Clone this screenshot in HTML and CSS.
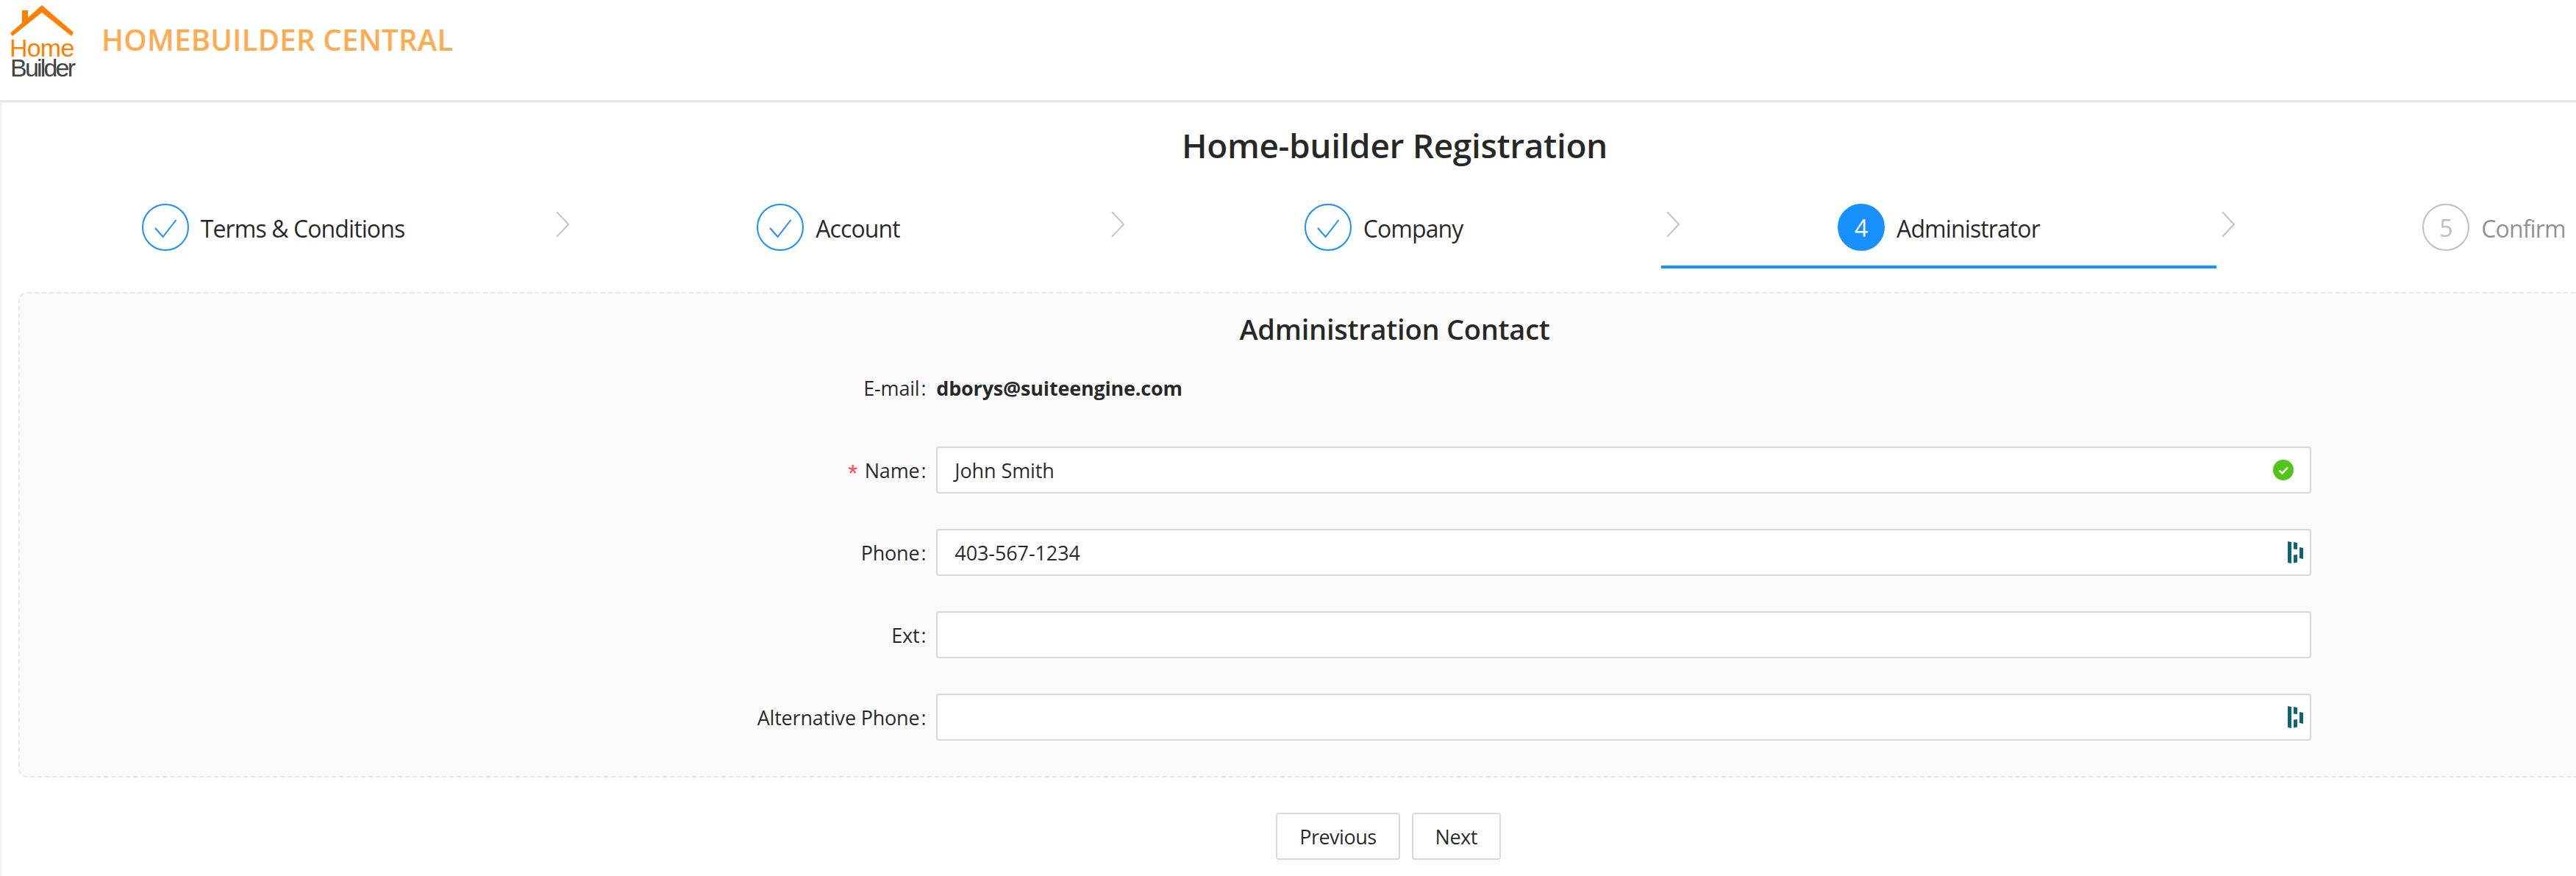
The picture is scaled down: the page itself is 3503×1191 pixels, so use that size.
FILE: index.html
```html
<!DOCTYPE html>
<html lang="en">
<head>
<meta charset="utf-8">
<title>Home-builder Registration</title>
<link rel="stylesheet" href="styles.css">
</head>
<body>
<header class="topbar">
  <div class="logo">
    <svg class="logo-roof" width="90" height="45" viewBox="0 0 90 45"><path fill="#ff8000" d="M44 0 87 37 84 42 44 10 4 42 1 38 17 24V7H25V17Z"/></svg>
    <span class="logo-home">Home</span>
    <span class="logo-builder">Builder</span>
  </div>
  <div class="brand">HOMEBUILDER CENTRAL</div>
</header>
<main class="main">
  <h1 class="page-title">Home-builder Registration</h1>
  <nav class="steps">
    <div class="step done"><span class="step-icon"><svg width="32" height="32" viewBox="0 0 32 32"><path d="M2 17 12.600 29 30.500 6" fill="none" stroke="#1890ff" stroke-width="2"/></svg></span><span class="step-title">Terms &amp; Conditions</span><svg class="chev" width="18" height="34" viewBox="0 0 18 34"><path d="M1 0 17 17 1 34" fill="none" stroke="#c4c4c4" stroke-width="2"/></svg></div>
    <div class="step done"><span class="step-icon"><svg width="32" height="32" viewBox="0 0 32 32"><path d="M2 17 12.600 29 30.500 6" fill="none" stroke="#1890ff" stroke-width="2"/></svg></span><span class="step-title">Account</span><svg class="chev" width="18" height="34" viewBox="0 0 18 34"><path d="M1 0 17 17 1 34" fill="none" stroke="#c4c4c4" stroke-width="2"/></svg></div>
    <div class="step done"><span class="step-icon"><svg width="32" height="32" viewBox="0 0 32 32"><path d="M2 17 12.600 29 30.500 6" fill="none" stroke="#1890ff" stroke-width="2"/></svg></span><span class="step-title">Company</span><svg class="chev" width="18" height="34" viewBox="0 0 18 34"><path d="M1 0 17 17 1 34" fill="none" stroke="#c4c4c4" stroke-width="2"/></svg></div>
    <div class="step active"><span class="step-icon">4</span><span class="step-title">Administrator</span><svg class="chev" width="18" height="34" viewBox="0 0 18 34"><path d="M1 0 17 17 1 34" fill="none" stroke="#c4c4c4" stroke-width="2"/></svg></div>
    <div class="step wait"><span class="step-icon">5</span><span class="step-title">Confirm</span></div>
  </nav>
  <section class="panel">
    <h2 class="panel-title">Administration Contact</h2>
    <div class="row">
      <span class="label">E-mail<i class="colon">:</i></span>
      <span class="value">dborys@suiteengine.com</span>
    </div>
    <div class="row">
      <span class="label"><b class="req">*</b>Name<i class="colon">:</i></span>
      <div class="field"><span class="field-text">John Smith</span>
        <svg class="field-icon" width="28" height="28" viewBox="0 0 28 28"><circle cx="14" cy="14" r="14" fill="#52c41a"/><path d="M8.500 14.500 12.500 18.500 20 10.500" fill="none" stroke="#fff" stroke-width="2.400"/></svg></div>
    </div>
    <div class="row">
      <span class="label">Phone<i class="colon">:</i></span>
      <div class="field"><span class="field-text">403-567-1234</span>
        <svg class="field-dash" width="22" height="30" viewBox="0 0 22 30"><path fill="#0e6378" d="M0 0 5 1V30L0 29ZM8 1 13 2V11L8 10.500ZM8 18.500 13 18V28.500L8 29.500ZM16 8 21 9V24L16 23Z"/></svg></div>
    </div>
    <div class="row">
      <span class="label">Ext<i class="colon">:</i></span>
      <div class="field"></div>
    </div>
    <div class="row">
      <span class="label">Alternative Phone<i class="colon">:</i></span>
      <div class="field">
        <svg class="field-dash" width="22" height="30" viewBox="0 0 22 30"><path fill="#0e6378" d="M0 0 5 1V30L0 29ZM8 1 13 2V11L8 10.500ZM8 18.500 13 18V28.500L8 29.500ZM16 8 21 9V24L16 23Z"/></svg></div>
    </div>
  </section>
  <div class="actions">
    <button class="btn" type="button">Previous</button>
    <button class="btn" type="button">Next</button>
  </div>
</main>
</body>
</html>
```
FILE: styles.css
```css
* { box-sizing: border-box; }
html, body { margin: 0; height: 100%; overflow: hidden; background: #fff; }
body { font-family: "Open Sans", "Noto Sans", sans-serif; color: rgba(0,0,0,.85); width: 3503px; }

.topbar { height: 139px; border-bottom: 3px solid #e6e8ec; box-shadow: 0 1px 2px rgba(0,21,41,.06); display: flex; align-items: flex-start; padding-left: 13px; }
.logo { width: 90px; padding-top: 7px; display: flex; flex-direction: column; font-family: "Liberation Sans", sans-serif; line-height: 27px; font-size: 34px; }
.logo-roof { display: block; }
.logo-home { color: #ff8000; letter-spacing: -.8px; }
.logo-builder { color: #444; letter-spacing: -2.800px; padding-left: 1px; white-space: nowrap; }
.brand { margin: 27px 0 0 35px; font-size: 40px; line-height: 54px; color: #ffab52; font-weight: 600; letter-spacing: .25px; white-space: nowrap; }

.main { width: 3790px; border-left: 3px solid #f2f2f2; height: 1052px; }
.page-title { margin: 0; padding-top: 34px; height: 107px; text-align: center; font-size: 46px; line-height: 48px; font-weight: 600; letter-spacing: -.36px; }
.steps { display: flex; margin: 0 0 0 -9px; width: 3775px; height: 119px; }
.step { flex: 0 0 755px; height: 119px; display: flex; align-items: flex-start; justify-content: center; padding-top: 31px; position: relative; }
.step.active { border-bottom: 4px solid #1890ff; }
.step-icon { width: 64px; height: 64px; border-radius: 50%; border: 2px solid #1890ff; display: flex; align-items: center; justify-content: center; font-size: 32px; color: #1890ff; margin-right: 16px; }
.step.active .step-icon { background: #1890ff; color: #fff; }
.step.wait .step-icon { border-color: #bfbfbf; color: #bfbfbf; }
.step-title { font-size: 32px; line-height: 64px; padding-top: 2px; letter-spacing: -.9px; white-space: nowrap; }
.step.wait .step-title { color: rgba(0,0,0,.45); }
.chev { position: absolute; left: 762px; top: 42px; }

.panel { margin: 32px 22px 0; height: 660px; background: #fafafa; border: 2px dashed #e9e9e9; border-radius: 12px; padding-top: 16px; }
.panel-title { margin: 0; height: 80px; text-align: center; font-size: 38px; line-height: 64px; font-weight: 600; letter-spacing: -.25px; }
.row { display: grid; grid-template-columns: 8fr 12fr 4fr; height: 64px; margin-bottom: 48px; align-items: center; font-size: 27px; }
.label { text-align: right; padding-right: 16px; white-space: nowrap; letter-spacing: -.2px; }
.colon { font-style: normal; margin-left: 2px; margin-right: -2px; }
.req { font-family: "Liberation Mono", monospace; font-weight: 400; font-size: 34px; line-height: 0; vertical-align: -6px; color: #ff4d4f; margin-right: 6px; }
.value { font-weight: 700; letter-spacing: -.2px; }
.field { height: 64px; background: #fff; border: 2px solid #d9d9d9; border-radius: 4px; display: flex; align-items: center; padding: 0 22px 0 23px; position: relative; letter-spacing: -.1px; }
.field-icon { position: absolute; right: 22px; top: 16px; }
.field-dash { position: absolute; right: 8px; top: 15px; }

.actions { display: flex; justify-content: center; gap: 16px; margin: 48px 0 0 -17px; }
.btn { height: 64px; padding: 0 30px; background: #fff; border: 2px solid #d9d9d9; border-radius: 4px; font: inherit; font-size: 27px; color: rgba(0,0,0,.85); box-shadow: 0 4px 0 rgba(0,0,0,.015); letter-spacing: -.5px; }
```
